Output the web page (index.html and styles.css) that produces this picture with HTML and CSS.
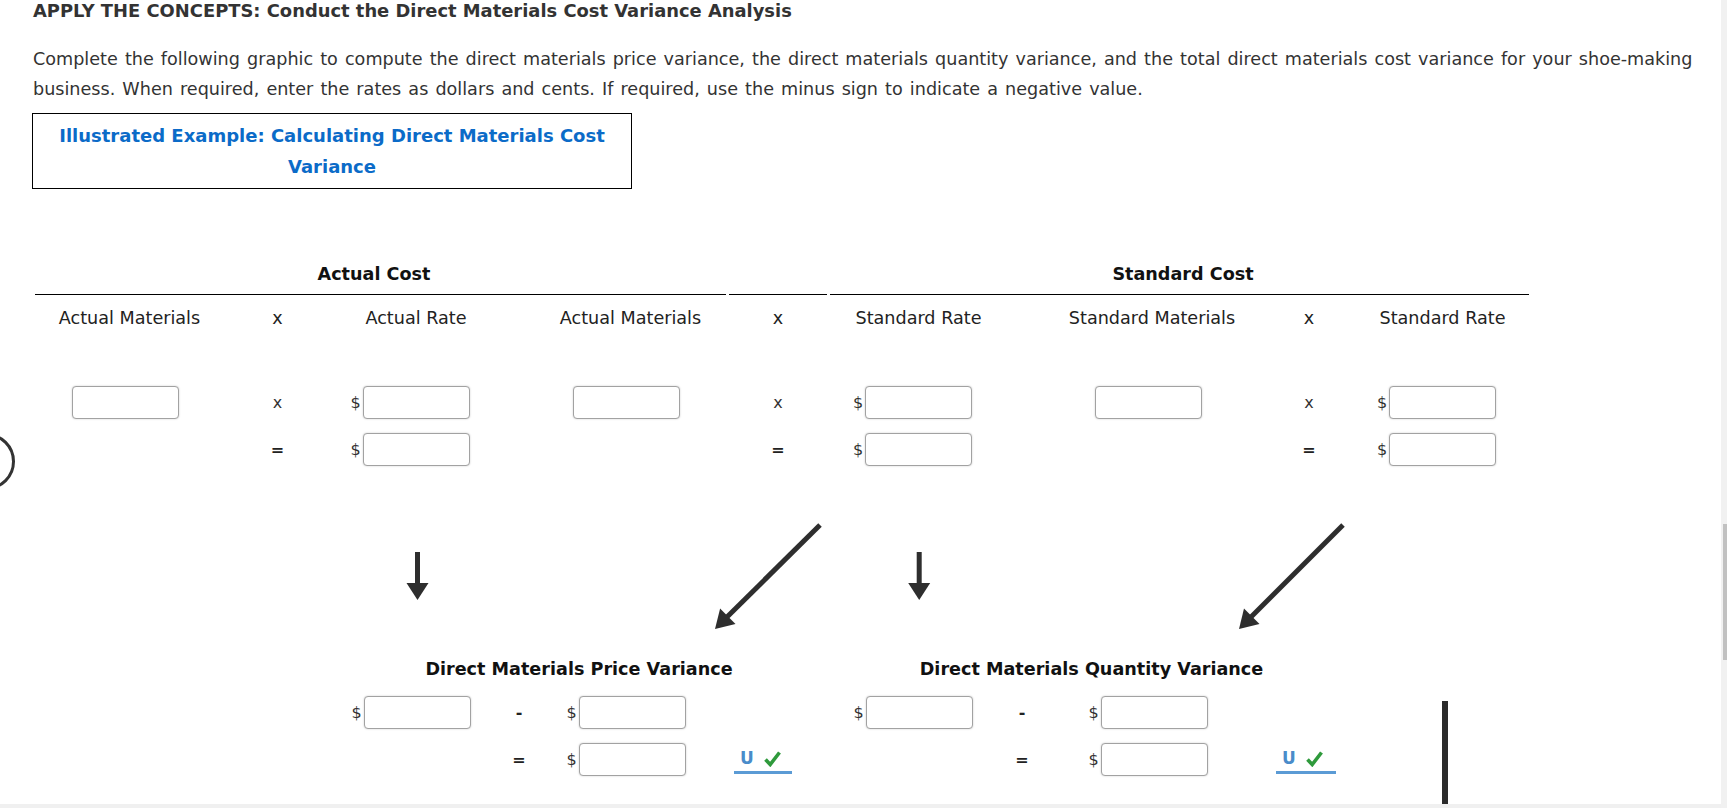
FILE: index.html
```html
<!DOCTYPE html>
<html lang="en">
<head>
<meta charset="utf-8">
<title>Direct Materials Cost Variance Analysis</title>
<link rel="stylesheet" href="styles.css">
</head>
<body>
<div class="page">
  <h1 class="title">APPLY THE CONCEPTS: Conduct the Direct Materials Cost Variance Analysis</h1>
  <p class="intro">Complete the following graphic to compute the direct materials price variance, the direct materials quantity variance, and the total direct materials cost variance for your shoe-making business. When required, enter the rates as dollars and cents. If required, use the minus sign to indicate a negative value.</p>
  <div class="example"><a class="example-link">Illustrated Example: Calculating Direct Materials Cost Variance</a></div>

  <div class="cost-head">
    <div class="seg seg-actual">Actual Cost</div>
    <div class="seg seg-mid"></div>
    <div class="seg seg-std">Standard Cost</div>
  </div>

  <div class="calc">
    <div class="row labels">
      <span>Actual Materials</span>
      <span>x</span>
      <span>Actual Rate</span>
      <span>Actual Materials</span>
      <span>x</span>
      <span>Standard Rate</span>
      <span>Standard Materials</span>
      <span>x</span>
      <span>Standard Rate</span>
    </div>
    <div class="row inputs first">
      <input class="fld plain" type="text">
      <span class="op-x">x</span>
      <span class="money"><span class="cur">$</span><input class="fld" type="text"></span>
      <input class="fld plain" type="text">
      <span class="op-x">x</span>
      <span class="money"><span class="cur">$</span><input class="fld" type="text"></span>
      <input class="fld plain" type="text">
      <span class="op-x">x</span>
      <span class="money"><span class="cur">$</span><input class="fld" type="text"></span>
    </div>
    <div class="row inputs second">
      <span></span>
      <span class="op">=</span>
      <span class="money"><span class="cur">$</span><input class="fld" type="text"></span>
      <span></span>
      <span class="op">=</span>
      <span class="money"><span class="cur">$</span><input class="fld" type="text"></span>
      <span></span>
      <span class="op">=</span>
      <span class="money"><span class="cur">$</span><input class="fld" type="text"></span>
    </div>
  </div>

  <svg class="arrows" width="1400" height="110" viewBox="0 0 1400 110">
    <g fill="#2e2e2e">
      <rect x="382" y="30" width="5" height="34"/>
      <polygon points="373.5,61 395.5,61 384.5,78"/>
      <rect x="883.7" y="30" width="5" height="34"/>
      <polygon points="875.2,61 897.2,61 886.2,78"/>
      <polygon points="682,107 702.5,102.1 687.1,86.5"/>
      <polygon points="1206,107 1226.5,102 1211,86.5"/>
    </g>
    <g stroke="#2e2e2e" stroke-width="5">
      <line x1="787" y1="3" x2="693" y2="96"/>
      <line x1="1310" y1="3" x2="1217" y2="96"/>
    </g>
  </svg>

  <div class="variances">
    <div class="var var-price">
      <div class="var-title">Direct Materials Price Variance</div>
      <div class="var-grid">
        <span class="money"><span class="cur">$</span><input class="fld" type="text"></span>
        <span class="op">-</span>
        <span class="money"><span class="cur">$</span><input class="fld" type="text"></span>
        <span></span>
        <span></span>
        <span class="op">=</span>
        <span class="money"><span class="cur">$</span><input class="fld" type="text"></span>
        <span class="uv"><span class="uv-letter">U</span><svg class="check" width="17" height="17" viewBox="0 0 17 17"><path d="M1.5 9.5 L6.2 14.5 L15.5 2.5" fill="none" stroke="#2f9a3c" stroke-width="3.6" stroke-linejoin="miter"/></svg></span>
      </div>
    </div>
    <div class="var var-qty">
      <div class="var-title">Direct Materials Quantity Variance</div>
      <div class="var-grid">
        <span class="money"><span class="cur">$</span><input class="fld" type="text"></span>
        <span class="op">-</span>
        <span class="money"><span class="cur">$</span><input class="fld" type="text"></span>
        <span></span>
        <span></span>
        <span class="op">=</span>
        <span class="money"><span class="cur">$</span><input class="fld" type="text"></span>
        <span class="uv wide"><span class="uv-letter">U</span><svg class="check" width="17" height="17" viewBox="0 0 17 17"><path d="M1.5 9.5 L6.2 14.5 L15.5 2.5" fill="none" stroke="#2f9a3c" stroke-width="3.6" stroke-linejoin="miter"/></svg></span>
      </div>
    </div>
    <div class="total-bar"></div>
  </div>
</div>

<div class="help-circle"></div>
<div class="vscroll"><div class="vthumb"></div></div>
<div class="hscroll"></div>
</body>
</html>
```

FILE: styles.css
```css
* { box-sizing: border-box; }

html, body {
  margin: 0;
  padding: 0;
  height: 808px;
  overflow: hidden;
  background: #ffffff;
}

body {
  font-family: "DejaVu Sans", Verdana, sans-serif;
  color: #333333;
}

.page {
  padding-left: 33px;
}

.title {
  margin: 0;
  font-size: 17.9px;
  line-height: 22px;
  font-weight: bold;
  color: #333333;
}

.intro {
  margin: 22px 0 0;
  font-size: 17.6px;
  line-height: 30px;
  word-spacing: 1.5px;
  width: 1690px;
}

.example {
  margin: 9.3px 0 0 -1px;
  width: 600px;
  border: 1px solid #000000;
  padding: 6px 10px 6px;
  text-align: center;
  font-size: 18px;
  line-height: 31px;
}

.example-link {
  color: #0b6bc8;
  font-weight: bold;
  text-decoration: none;
}

.cost-head {
  display: flex;
  gap: 3px;
  margin: 74px 0 0 2px;
}

.seg {
  height: 32px;
  line-height: 22px;
  padding-bottom: 9px;
  border-bottom: 1px solid #000000;
  font-weight: bold;
  font-size: 17.6px;
  color: #111111;
  text-align: center;
}

.seg-actual { width: 691px; padding-right: 13px; }
.seg-mid { width: 98px; }
.seg-std { width: 699px; padding-left: 7px; }

.calc {
  margin-left: 2px;
  --cols: 189px 107px 170px 259px 36px 245px 222px 92px 175px;
}

.row {
  display: grid;
  grid-template-columns: var(--cols);
  align-items: center;
  justify-items: center;
}

.labels {
  margin-top: 12px;
  height: 22px;
  line-height: 22px;
  font-size: 17.6px;
  color: #222222;
}

.inputs { height: 33px; }
.inputs.first { margin-top: 57px; }
.inputs.second { margin-top: 14px; }

.fld {
  display: block;
  width: 107px;
  height: 33px;
  margin: 0;
  padding: 0 4px;
  border: 1px solid #a2a2a2;
  border-radius: 4px;
  background: #ffffff;
  box-shadow: 0 0 2px rgba(0, 0, 0, 0.22);
  font: inherit;
  outline: none;
}

.fld.plain { margin-right: 8px; }

.money {
  display: flex;
  align-items: center;
  margin-left: -12px;
}

.cur {
  width: 12px;
  font-size: 16px;
  color: #333333;
  text-align: left;
}

.op-x {
  font-size: 16px;
  color: #333333;
}

.op {
  font-size: 16px;
  font-weight: bold;
  color: #222222;
}

.arrows {
  display: block;
  margin-top: 56px;
}

.variances {
  display: flex;
  align-items: flex-start;
  margin: 26px 0 0 307px;
}

.var-price { width: 478px; }
.var-qty { width: 503px; margin-left: 22px; }

.var-title {
  line-height: 22px;
  font-size: 17.6px;
  font-weight: bold;
  color: #111111;
  text-align: center;
}

.var-grid {
  display: grid;
  grid-template-rows: 33px 33px;
  row-gap: 14px;
  margin-top: 16px;
  align-items: center;
  justify-items: center;
}

.var-price .var-grid { grid-template-columns: 154px 50px 176px 86px; }
.var-qty .var-grid { grid-template-columns: 158px 48px 216px 88px; }

.uv {
  align-self: end;
  margin-bottom: 2px;
  display: flex;
  align-items: center;
  width: 58px;
  padding: 0 0 3px 6px;
  border-bottom: 3px solid #5b9bd5;
}

.uv.wide { width: 60px; }

.uv-letter {
  font-size: 17px;
  line-height: 20px;
  font-weight: bold;
  color: #4a8cca;
}

.check {
  display: block;
  margin-left: 10px;
}

.total-bar {
  width: 6px;
  height: 130px;
  margin: 43px 0 0 98.5px;
  background: #2b2b2b;
}

.help-circle {
  position: fixed;
  left: -42px;
  top: 433px;
  width: 57px;
  height: 57px;
  border: 3px solid #333333;
  border-radius: 50%;
  background: #ffffff;
}

.vscroll {
  position: fixed;
  top: 0;
  right: 0;
  width: 6px;
  height: 808px;
  background: #f1f1f1;
}

.vthumb {
  margin: 524px 0 0 2px;
  width: 4px;
  height: 136px;
  background: #c1c1c1;
}

.hscroll {
  position: fixed;
  left: 0;
  bottom: 0;
  width: 1721px;
  height: 4px;
  background: #f0f0f0;
}
```
